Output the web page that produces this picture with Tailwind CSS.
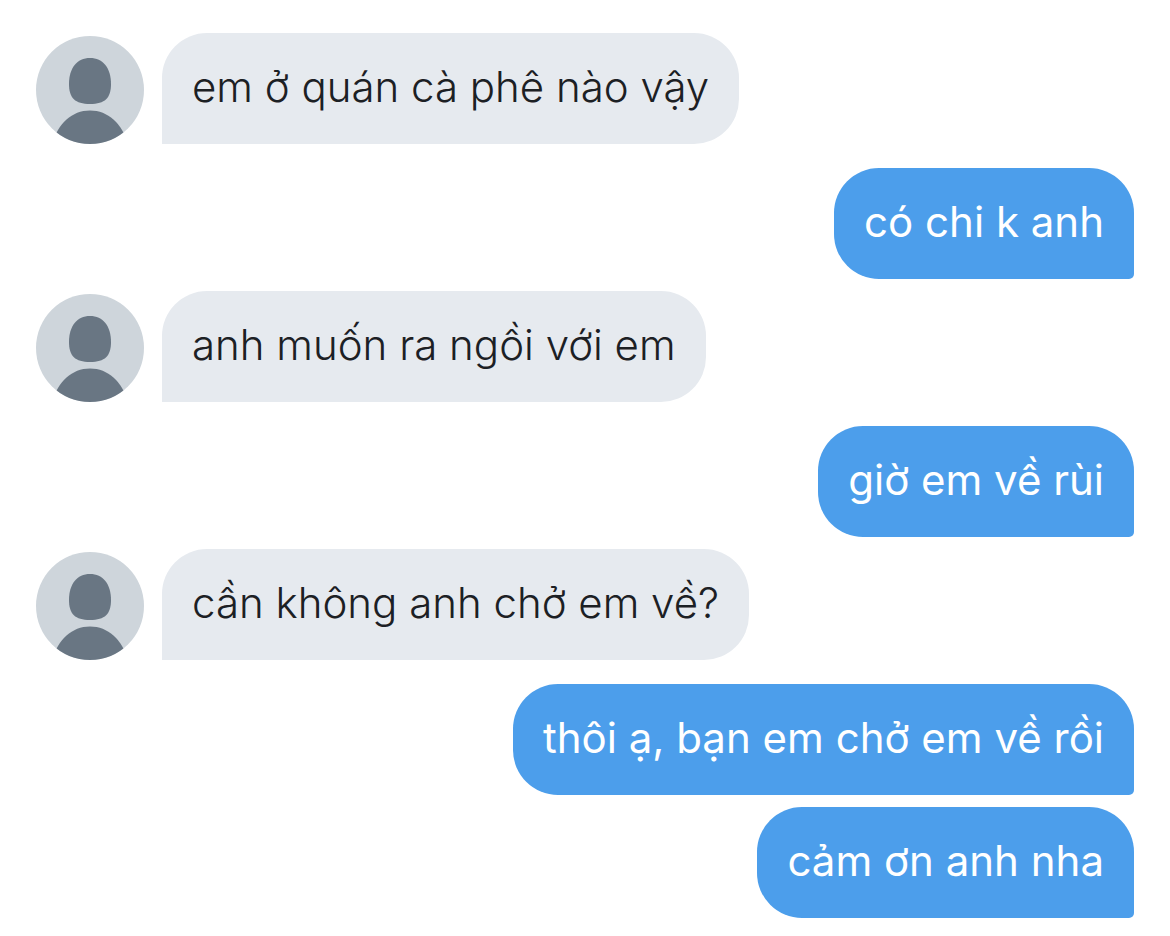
<!DOCTYPE html>
<html lang="vi" class="h-full bg-white">
<head>
  <meta charset="UTF-8" />
  <meta name="viewport" content="width=device-width, initial-scale=1" />
  <title>Tin nhắn</title>
  <script src="https://cdn.jsdelivr.net/npm/@tailwindcss/browser@4"></script>
</head>
<body class="bg-white px-9 pt-[33px] pb-[18px] font-['Inter',sans-serif] text-[42px] leading-[50px] text-[#1c2024]">

  <!-- Avatar symbol -->
  <svg class="hidden" aria-hidden="true">
    <symbol id="avatar" viewBox="0 0 108 108">
      <rect width="108" height="108" fill="#ced5db" />
      <path d="M54 22C67 22 75 32 75 48C75 62 69 68 54 68C39 68 33 62 33 48C33 32 41 22 54 22Z" fill="#697683" />
      <path d="M14 114C20 90 34 74.500 54 74.500C74 74.500 88 90 94 114Z" fill="#697683" />
    </symbol>
  </svg>

  <main class="flex flex-col">
    <div class="flex items-end gap-[18px]">
      <svg class="size-[108px] shrink-0 rounded-full" role="img" aria-label="Ảnh đại diện"><use href="#avatar" /></svg>
      <p class="rounded-[45px] rounded-bl-none bg-[#e6eaef] px-[30px] pt-[29px] pb-8 font-light">em ở quán cà phê nào vậy</p>
    </div>

    <p class="mt-6 self-end rounded-[45px] rounded-br-[5px] bg-[#4c9eeb] px-[30px] pt-[29px] pb-8 text-white">có chi k anh</p>

    <div class="mt-3 flex items-end gap-[18px]">
      <svg class="size-[108px] shrink-0 rounded-full" role="img" aria-label="Ảnh đại diện"><use href="#avatar" /></svg>
      <p class="rounded-[45px] rounded-bl-none bg-[#e6eaef] px-[30px] pt-[29px] pb-8 font-light">anh muốn ra ngồi với em</p>
    </div>

    <p class="mt-6 self-end rounded-[45px] rounded-br-[5px] bg-[#4c9eeb] px-[30px] pt-[29px] pb-8 text-white">giờ em về rùi</p>

    <div class="mt-3 flex items-end gap-[18px]">
      <svg class="size-[108px] shrink-0 rounded-full" role="img" aria-label="Ảnh đại diện"><use href="#avatar" /></svg>
      <p class="rounded-[45px] rounded-bl-none bg-[#e6eaef] px-[30px] pt-[29px] pb-8 font-light">cần không anh chở em về?</p>
    </div>

    <p class="mt-6 self-end rounded-[45px] rounded-br-[5px] bg-[#4c9eeb] px-[30px] pt-[29px] pb-8 text-white">thôi ạ, bạn em chở em về rồi</p>

    <p class="mt-3 self-end rounded-[45px] rounded-br-[5px] bg-[#4c9eeb] px-[30px] pt-[29px] pb-8 text-white">cảm ơn anh nha</p>
  </main>

</body>
</html>
